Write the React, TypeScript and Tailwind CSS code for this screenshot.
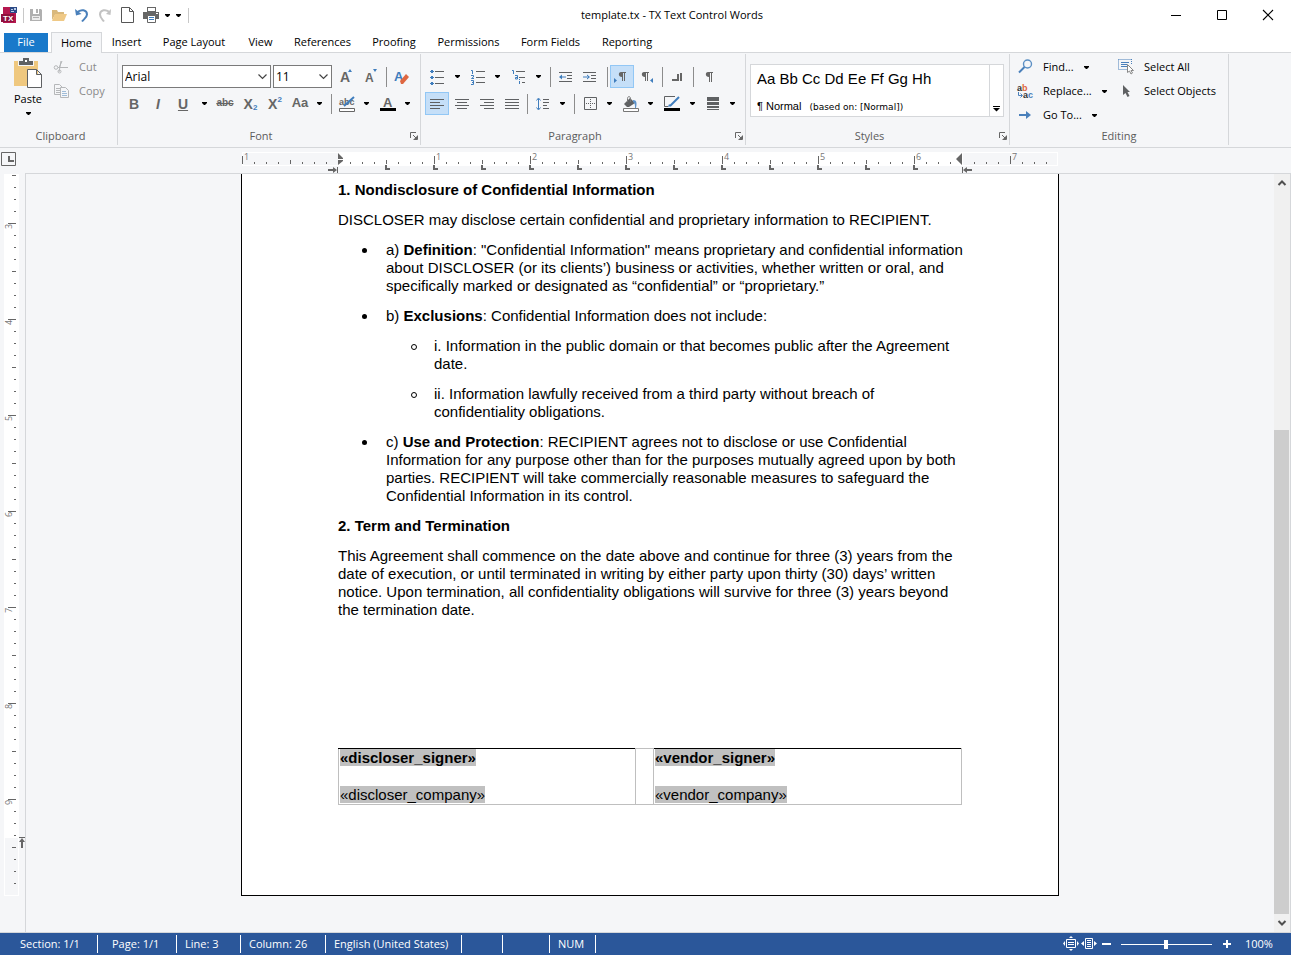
import React from "react";

const tabs = [
  { name: "Insert", width: "w-[49px]" },
  { name: "Page Layout", width: "w-[86px]" },
  { name: "View", width: "w-[47px]" },
  { name: "References", width: "w-[77px]" },
  { name: "Proofing", width: "w-[66px]" },
  { name: "Permissions", width: "w-[83px]" },
  { name: "Form Fields", width: "w-[81px]" },
  { name: "Reporting", width: "w-[72px]" },
];

type Kids = { children?: React.ReactNode };

function Icon({ w = 16, h = 16, children }: Kids & { w?: number; h?: number }) {
  return (
    <svg width={w} height={h} viewBox={`0 0 ${w} ${h}`} fill="none" aria-hidden="true" className="shrink-0 overflow-visible">
      {children}
    </svg>
  );
}

function Caret() {
  return (
    <svg width="5" height="3" viewBox="0 0 5 3" aria-hidden="true" className="shrink-0">
      <path d="M0 0h5v1L3 3H2L0 1z" fill="#000" />
    </svg>
  );
}

function Tool({ label, className, active, children }: Kids & { label: string; className: string; active?: boolean }) {
  return (
    <button
      type="button"
      aria-label={label}
      aria-pressed={active}
      className={`${className} flex h-[23px] shrink-0 items-center justify-center ${
        active ? "border border-[#92c7f5] bg-[#c5dff8]" : ""
      }`}
    >
      {children}
    </button>
  );
}

function Drop({ label, className }: { label: string; className: string }) {
  return (
    <Tool label={label} className={className}>
      <Caret />
    </Tool>
  );
}

function Sep({ className }: { className: string }) {
  return (
    <span className={`${className} flex h-[23px] shrink-0 items-center justify-center`}>
      <span className="h-5 w-px bg-[#8c8c8c]" />
    </span>
  );
}

function Group({ title, className, launcher, children }: Kids & { title: string; className: string; launcher?: boolean }) {
  return (
    <section aria-label={title} className={`${className} flex h-[91px] shrink-0 flex-col border-r border-[#d5d7da]`}>
      <div className="flex-1">{children}</div>
      <div className="flex h-[18px] items-center text-[#5c5c5c]">
        <h2 className="flex-1 text-center">{title}</h2>
        {launcher && (
          <button type="button" aria-label={`${title} settings`} className="w-5 pl-[10px]">
            <Icon w={8} h={8}>
              <path d="M.5 6V.5H6M3 3l3 3M7.500 3.500v4h-4" stroke="#666" />
              <path d="M7 4v3H4z" fill="#666" />
            </Icon>
          </button>
        )}
      </div>
    </section>
  );
}

function Lines({ rows }: { rows: number[][] }) {
  return (
    <Icon>
      {rows.map(([y, x1, x2]) => (
        <path key={y} d={`M${x1} ${y}.5H${x2}`} stroke="#5f6163" />
      ))}
    </Icon>
  );
}

const blue = "#3f7dbd";
const grey = "#666";

function Combo({ label, value, options, className }: { label: string; value: string; options: string[]; className: string }) {
  return (
    <span className={`${className} relative block h-[23px]`}>
      <select
        aria-label={label}
        defaultValue={value}
        className="h-full w-full appearance-none rounded-none border border-[#7a7a7a] bg-white pl-[2px] text-black"
      >
        {options.map((o) => (
          <option key={o}>{o}</option>
        ))}
      </select>
      <span className="pointer-events-none absolute top-[9px] right-1">
        <Icon w={9} h={6}>
          <path d="M.5.5l4 4 4-4" stroke="#444" strokeWidth="1.200" />
        </Icon>
      </span>
    </span>
  );
}

function TitleBar() {
  return (
    <header className="flex h-[30px] items-center bg-white">
      <div className="flex w-[191px] shrink-0 items-center">
        <svg width="17" height="18" viewBox="0 0 17 18" className="ml-px shrink-0" aria-hidden="true">
          <path d="M2 1h7v6h6v10H2z" fill="#b5174f" />
          <path d="M9 1h7v6H9z" fill="#2c4a86" />
          <path d="M10 3h2v1h-2zM13 2h2v2h-2zM10 5h3v1h-3z" fill="#b9cbe8" />
          <path d="M0 8h13v8H0z" fill="#8f0f3d" />
          <text x="2" y="15" fontSize="8" fontWeight="700" fill="#fff" fontFamily="Liberation Sans, sans-serif">TX</text>
        </svg>
        <span className="ml-[5px] h-[15px] w-px bg-[#c8c8c8]" />
        <button type="button" aria-label="Save" className="flex w-[23px] justify-center">
          <Icon w={14} h={14}>
            <path d="M1 1h11l1 1v11H1z" fill="#b0b0b0" />
            <path d="M4 1h6v5H4z" fill="#fff" />
            <path d="M7 1h2v4H7z" fill="#b0b0b0" />
            <path d="M3 8h8v4H3z" fill="#ececec" />
            <path d="M4 9.500h6" stroke="#b0b0b0" />
          </Icon>
        </button>
        <button type="button" aria-label="Open" className="flex w-[23px] justify-center">
          <Icon w={16} h={14}>
            <path d="M1 2h5l1 2h6v3H4l-3 5z" fill="#d9b87c" />
            <path d="M4 6h12l-3 7H1z" fill="#efc986" />
          </Icon>
        </button>
        <button type="button" aria-label="Undo" className="flex w-[23px] justify-center">
          <Icon w={14} h={14}>
            <path d="M2 4.500C6 .5 12 2 12 6.500c0 3-3 4.500-5 7" stroke="#4a80bb" strokeWidth="2" />
            <path d="M0 1l1 6.500L6.500 6z" fill="#4a80bb" />
          </Icon>
        </button>
        <button type="button" aria-label="Redo" className="flex w-[23px] justify-center">
          <Icon w={14} h={14}>
            <path d="M12 4.500C8 .5 2 2 2 6.500c0 3 2 4.500 4 7" stroke="#c2c2c2" strokeWidth="2" />
            <path d="M13 1l-.5 6L8 6z" fill="#c2c2c2" />
          </Icon>
        </button>
        <button type="button" aria-label="New" className="flex w-[23px] justify-center">
          <Icon w={13} h={16}>
            <path d="M.5.5h8l4 4v11H.5zM8.500.5v4h4" stroke="#555" />
          </Icon>
        </button>
        <button type="button" aria-label="Print" className="flex w-[23px] justify-center">
          <Icon w={16} h={16}>
            <path d="M4 0h9v5H4z" fill={grey} />
            <path d="M5 1h7v3H5z" fill="#fff" />
            <path d="M0 5h16v7H0z" fill={grey} />
            <path d="M13 6h2v1h-2z" fill="#fff" />
            <path d="M4.500 8.500h8v7h-8z" fill="#fff" stroke={grey} />
            <path d="M6 10.500h5M6 12.500h5" stroke={blue} />
          </Icon>
        </button>
        <button type="button" aria-label="Print options" className="flex w-[11px] justify-center">
          <Caret />
        </button>
        <button type="button" aria-label="Customize toolbar" className="flex w-[11px] justify-center">
          <Caret />
        </button>
        <span className="ml-1 h-[15px] w-px bg-[#c8c8c8]" />
      </div>
      <h1 className="flex-1 text-center text-black">template.tx - TX Text Control Words</h1>
      <div className="flex shrink-0">
        <button type="button" aria-label="Minimize" className="flex w-[46px] justify-center">
          <Icon w={10} h={10}><path d="M0 5.500h10" stroke="#000" /></Icon>
        </button>
        <button type="button" aria-label="Maximize" className="flex w-[46px] justify-center">
          <Icon w={10} h={10}><path d="M.5.5h9v9h-9z" stroke="#000" /></Icon>
        </button>
        <button type="button" aria-label="Close" className="flex w-[46px] justify-center">
          <Icon w={10} h={10}><path d="M0 0l10 10M10 0L0 10" stroke="#000" strokeWidth="1.100" /></Icon>
        </button>
      </div>
    </header>
  );
}

function TabRow() {
  return (
    <nav aria-label="Ribbon" className="flex h-[22px] items-end bg-white pl-1 text-black">
      <button type="button" className="h-[19px] w-11 bg-[#1979ca] text-white">File</button>
      <button
        type="button"
        aria-current="page"
        className="relative top-px ml-[3px] h-[21px] w-[51px] border border-b-0 border-[#d5d7da] bg-[#f5f6f8]"
      >
        Home
      </button>
      {tabs.map((t) => (
        <button key={t.name} type="button" className={`${t.width} h-5 shrink-0 whitespace-nowrap`}>
          {t.name}
        </button>
      ))}
    </nav>
  );
}

function Clipboard() {
  return (
    <Group title="Clipboard" className="w-[118px] pl-1">
      <div className="flex">
        <button type="button" className="flex w-12 flex-col items-center pt-1 text-black">
          <Icon w={28} h={31}>
            <path d="M0 3h24v25H0z" fill="#efc87f" />
            <path d="M9 0h6v3h4v4H5V3h4z" fill="#5f6163" />
            <path d="M11 2h2v2h-2z" fill="#fff" />
            <path d="M4 3h1v4h14V3h1v5H4z" fill="#f5f6f8" />
            <path d="M13.500 11.500h9l5 5v13h-14zM22.500 11.500v5h5" fill="#fff" stroke="#5f6163" />
          </Icon>
          <span className="h-5 leading-5">Paste</span>
          <span className="pt-[3px]"><Caret /></span>
        </button>
        <div className="flex flex-col pt-px text-[#8a8a8a]">
          <button type="button" className="flex h-6 items-center gap-2">
            <Icon w={19} h={14}>
              <path d="M6 7.500h10M7 8l3-7M9 1L7 12" stroke="#b5b7b9" />
              <circle cx="4" cy="7.500" r="1.800" stroke="#b5b7b9" />
              <circle cx="7.500" cy="11.500" r="1.500" stroke="#b5b7b9" />
            </Icon>
            Cut
          </button>
          <button type="button" className="flex h-6 items-center gap-2">
            <Icon w={19} h={14}>
              <path d="M2.500.5h5l3 3v7h-8zM4 4.500h4M4 6.500h4M4 8.500h4" stroke="#b5b7b9" />
              <path d="M8.500 3.500h5l3 3v7h-8z" fill="#f5f6f8" stroke="#b5b7b9" />
              <path d="M10 7.500h4M10 9.500h5M10 11.500h5" stroke="#9fbcd8" />
            </Icon>
            Copy
          </button>
        </div>
      </div>
    </Group>
  );
}

function FontGroup() {
  return (
    <Group title="Font" launcher className="pl-1">
      <div className="flex flex-col gap-1 pt-[11px] pr-[5px] font-['Liberation_Sans',sans-serif] text-sm font-bold text-[#666]">
        <div className="flex font-['Open_Sans','Noto_Sans',sans-serif] text-xs font-normal">
          <Combo label="Font family" value="Arial" options={["Arial", "Times New Roman"]} className="w-[149px]" />
          <Combo label="Font size" value="11" options={["10", "11", "12"]} className="ml-[2px] w-[59px]" />
          <Tool label="Grow font" className="ml-[2px] w-6">
            <Icon>
              <text x="2" y="13" fontSize="14" fontWeight="700" fill={grey} fontFamily="Liberation Sans, sans-serif">A</text>
              <path d="M10 3l2-3 2 3z" fill={blue} />
            </Icon>
          </Tool>
          <Tool label="Shrink font" className="w-[26px]">
            <Icon>
              <text x="2" y="13" fontSize="12" fontWeight="700" fill={grey} fontFamily="Liberation Sans, sans-serif">A</text>
              <path d="M10 0l2 3 2-3z" fill={blue} />
            </Icon>
          </Tool>
          <Sep className="w-[5px]" />
          <Tool label="Clear formatting" className="w-[26px]">
            <Icon>
              <text x="0" y="12" fontSize="13" fontWeight="700" fill={blue} fontFamily="Liberation Sans, sans-serif">A</text>
              <path d="M6 12l6-7 3 3-6 7H7z" fill="#de6741" />
            </Icon>
          </Tool>
        </div>
        <div className="flex">
          <Tool label="Bold" className="w-6">B</Tool>
          <Tool label="Italic" className="w-6"><i>I</i></Tool>
          <Tool label="Underline" className="w-[26px]"><u>U</u></Tool>
          <Drop label="Underline style" className="w-4" />
          <Tool label="Strikethrough" className="w-[26px]"><s className="text-[10px]">abc</s></Tool>
          <Tool label="Subscript" className="w-[25px]">X<span className="pt-2 text-[8px] text-[#3f7dbd]">2</span></Tool>
          <Tool label="Superscript" className="w-6">X<span className="pb-2 text-[8px] text-[#3f7dbd]">2</span></Tool>
          <Tool label="Change case" className="w-[26px] text-[13px]">Aa</Tool>
          <Drop label="Case options" className="w-3" />
          <Sep className="w-3" />
          <Tool label="Highlight color" className="w-5">
            <Icon>
              <text x="0" y="9" fontSize="9" fontWeight="700" fill={grey} fontFamily="Liberation Sans, sans-serif">abc</text>
              <path d="M15 1L5 10" stroke={blue} strokeWidth="2" />
              <path d="M.5 12.500h15v3H.5z" fill="#fff" stroke={grey} />
            </Icon>
          </Tool>
          <Drop label="Highlight options" className="w-[19px]" />
          <Tool label="Font color" className="w-6">
            <Icon>
              <text x="3" y="11" fontSize="13" fontWeight="700" fill={grey} fontFamily="Liberation Sans, sans-serif">A</text>
              <path d="M0 12h16v3H0z" fill="#000" />
            </Icon>
          </Tool>
          <Drop label="Font color options" className="w-[14px]" />
        </div>
      </div>
    </Group>
  );
}

function Paragraph() {
  return (
    <Group title="Paragraph" launcher className="pl-1">
      <div className="flex flex-col gap-1 pt-[11px] pr-2 font-['Liberation_Sans',sans-serif] text-sm font-bold text-[#666]">
        <div className="flex">
          <Tool label="Bullets" className="w-6">
            <Icon w={14} h={16}>
              <path d="M5 2.500h9M5 8.500h9M5 14.500h9" stroke="#5f6163" />
              <path d="M1 1h2v3H1zM1 7h2v3H1zM1 13h2v3H1zM0 2h4v1H0zM0 8h4v1H0zM0 14h4v1H0z" fill={blue} />
            </Icon>
          </Tool>
          <Drop label="Bullet options" className="w-[17px]" />
          <Tool label="Numbering" className="w-6">
            <Icon w={14} h={16}>
              <path d="M5 2.500h9M5 8.500h9M5 13.500h9" stroke="#5f6163" />
              <path d="M0 1.500h1.500V5M0 6.500h2.500v1.500L0.500 9.500H3M0 11.500h2.500v4H0M1 13.500h2" stroke={blue} />
            </Icon>
          </Tool>
          <Drop label="Numbering options" className="w-[15px]" />
          <Tool label="Multilevel list" className="w-7">
            <Icon w={14} h={16}>
              <path d="M4 2.500h9M7 8.500h6M10 13.500h3" stroke="#5f6163" />
              <path d="M0 1.500h1.500V5M3 6.500h2.500V10H3.500V8.500H5M7.500 10v1M7.500 12v3" stroke={blue} />
            </Icon>
          </Tool>
          <Drop label="Multilevel options" className="w-[10px]" />
          <Sep className="w-[14px]" />
          <Tool label="Decrease indent" className="w-[18px]">
            <Icon w={14} h={12}>
              <path d="M0 1.500h13M8 4.500h5M8 7.500h5M0 10.500h13" stroke="#5f6163" />
              <path d="M0 6l3-2.500v5zM2 5.500h5v1H2z" fill={blue} />
            </Icon>
          </Tool>
          <Tool label="Increase indent" className="w-[30px]">
            <Icon w={14} h={12}>
              <path d="M0 1.500h13M8 4.500h5M8 7.500h5M0 10.500h13" stroke="#5f6163" />
              <path d="M7 6L4 3.500v5zM0 5.500h5v1H0z" fill={blue} />
            </Icon>
          </Tool>
          <Sep className="w-[5px]" />
          <Tool label="Left to right" className="w-6" active>
            <Icon>
              <path d="M7 3h5v1h-1v8h-1V4H9v8H8V8C4 8 4 3 7 3z" fill={grey} />
              <path d="M0 9l3 2.500L0 14z" fill={blue} />
            </Icon>
          </Tool>
          <Tool label="Right to left" className="w-[26px]">
            <Icon>
              <path d="M5 3h5v1H9v8H8V4H7v8H6V8C2 8 2 3 5 3z" fill={grey} />
              <path d="M14 9l-3 2.500 3 2.500z" fill={blue} />
            </Icon>
          </Tool>
          <Sep className="w-[5px]" />
          <Tool label="Tabs" className="w-[26px]">
            <Icon w={12} h={10}>
              <path d="M5 2h2v7H0V7h5zM8 1h2v8H8z" fill={grey} />
            </Icon>
          </Tool>
          <Sep className="w-[5px]" />
          <Tool label="Show control characters" className="w-[26px]">
            <Icon>
              <path d="M7 3h5v1h-1v9h-1V4H9v9H8V8C4 8 4 3 7 3z" fill={grey} />
            </Icon>
          </Tool>
        </div>
        <div className="flex">
          <Tool label="Align left" className="w-6" active>
            <Lines rows={[[3, 1, 15], [6, 1, 11], [9, 1, 15], [12, 1, 11]]} />
          </Tool>
          <Tool label="Align center" className="w-[26px]">
            <Lines rows={[[3, 1, 15], [6, 3, 13], [9, 1, 15], [12, 3, 13]]} />
          </Tool>
          <Tool label="Align right" className="w-6">
            <Lines rows={[[3, 1, 15], [6, 5, 15], [9, 1, 15], [12, 5, 15]]} />
          </Tool>
          <Tool label="Justify" className="w-[26px]">
            <Lines rows={[[3, 1, 15], [6, 1, 15], [9, 1, 15], [12, 1, 15]]} />
          </Tool>
          <Sep className="w-[5px]" />
          <Tool label="Line spacing" className="w-[26px]">
            <Icon w={14} h={14}>
              <path d="M7 2.500h6M7 5.500h6M7 8.500h4M7 11.500h6" stroke="#5f6163" />
              <path d="M2.500 2v10M.5 3.500l2-2.500 2 2.500M.5 10.500l2 2.500 2-2.500" stroke={blue} />
            </Icon>
          </Tool>
          <Drop label="Line spacing options" className="w-[13px]" />
          <Sep className="w-[11px]" />
          <Tool label="Borders" className="w-5">
            <Icon w={13} h={13}>
              <path d="M.5.5h12v12H.5z" stroke="#5f6163" />
              <path d="M6.500 2v9M2 6.500h9" stroke="#5f6163" strokeDasharray="1 1" />
            </Icon>
          </Tool>
          <Drop label="Border options" className="w-[19px]" />
          <Tool label="Shading" className="w-6">
            <Icon>
              <path d="M7 2l5 5-6 4H4L1 8z" fill="#5f6163" />
              <path d="M4.500 6V2.500c0-2.500 3-2.500 3 0V6" stroke="#777" />
              <path d="M10 4c4 0 4 3 3 8h-1c0-3 0-5-2-6z" fill="#5d92c9" />
              <path d="M.5 12.500h15v3H.5z" fill="#fff" stroke="#777" />
            </Icon>
          </Tool>
          <Drop label="Shading options" className="w-[15px]" />
          <Tool label="Frame line color" className="w-7">
            <Icon>
              <path d="M11 .5H.5v10H4" stroke="#5f6163" />
              <path d="M15 1l-9 9" stroke={blue} strokeWidth="2" />
              <path d="M4 11l1-3 2 2z" fill={blue} />
              <path d="M0 12h16v3H0z" fill="#000" />
            </Icon>
          </Tool>
          <Drop label="Line color options" className="w-3" />
          <Tool label="Frame line width" className="w-[30px]">
            <Icon w={12} h={13}>
              <path d="M0 0h12v4H0zM0 5h12v3H0zM0 9h12v2H0zM0 12h12v1H0z" fill="#5f6163" />
            </Icon>
          </Tool>
          <Drop label="Line width options" className="w-[9px]" />
        </div>
      </div>
    </Group>
  );
}

function Styles() {
  return (
    <Group title="Styles" launcher className="pl-1">
      <div className="mt-[10px] mr-[5px] flex h-[53px] w-[254px] border border-[#d5d7da] bg-white text-black">
        <button type="button" className="flex flex-1 flex-col pl-[6px] text-left font-['Liberation_Sans',sans-serif] whitespace-nowrap">
          <span className="pt-1 text-[15px] leading-5">Aa Bb Cc Dd Ee Ff Gg Hh</span>
          <span className="flex items-baseline gap-2 pt-[9px] text-[11px] leading-4">
            <span>¶ Normal</span>
            <span className="font-['DejaVu_Sans',sans-serif] text-[9px]">(based on: [Normal])</span>
          </span>
        </button>
        <button type="button" aria-label="More styles" className="flex w-[14px] items-end justify-center border-l border-[#d5d7da] pb-1">
          <Icon w={7} h={6}>
            <path d="M0 .5h7" stroke="#000" />
            <path d="M0 2h7L3.500 5.500z" fill="#000" />
          </Icon>
        </button>
      </div>
    </Group>
  );
}

function Editing() {
  return (
    <Group title="Editing" className="w-[219px]">
      <div className="flex pt-px pl-[7px] text-black">
        <div className="flex w-[101px] flex-col">
          <div className="flex h-6 items-center">
            <button type="button" className="flex items-center gap-[10px]">
              <Icon>
                <circle cx="10.500" cy="5" r="4" stroke="#5b8fc4" strokeWidth="1.400" />
                <path d="M7.500 8L2 13.500" stroke="#4a80bb" strokeWidth="2" />
              </Icon>
              Find...
            </button>
            <button type="button" aria-label="Find options" className="ml-[10px]"><Caret /></button>
          </div>
          <div className="flex h-6 items-center">
            <button type="button" className="flex items-center gap-[10px]">
              <Icon>
                <g fontSize="9" fontWeight="700" fontFamily="Liberation Sans, sans-serif">
                  <text x="0" y="8" fill="#333">a</text>
                  <text x="5" y="8" fill="#de6741">b</text>
                  <text x="6" y="15" fill="#333">a</text>
                  <text x="11" y="15" fill="#4a80bb">c</text>
                </g>
                <path d="M1.500 9v3.500H5M3.500 10.500l2 2-2 2" stroke="#4a80bb" />
              </Icon>
              Replace...
            </button>
            <button type="button" aria-label="Replace options" className="ml-[10px]"><Caret /></button>
          </div>
          <div className="flex h-6 items-center">
            <button type="button" className="flex items-center gap-[10px]">
              <Icon>
                <path d="M2 7h7V4l5 4-5 4V9H2z" fill="#4a80bb" />
              </Icon>
              Go To...
            </button>
            <button type="button" aria-label="Go to options" className="ml-[10px]"><Caret /></button>
          </div>
        </div>
        <div className="flex flex-col whitespace-nowrap">
          <button type="button" className="flex h-6 items-center gap-[10px]">
            <Icon>
              <path d="M.5 .5h13M.5 10.500h9M.5 .5v10M13.500 0v6" stroke="#4a80bb" strokeDasharray="1 1" />
              <path d="M3 3.500h8M3 5.500h6M3 7.500h6" stroke="#4a80bb" />
              <path d="M9.500 5.500v8l2-1.500 1.500 3 1.500-1-1.500-2.500h2.500z" fill="#fff" stroke="#888" />
            </Icon>
            Select All
          </button>
          <button type="button" className="flex h-6 items-center gap-[10px]">
            <Icon>
              <path d="M5 2v10l2.500-2 2 4 2-1-2-4H12z" fill="#5f6163" />
            </Icon>
            Select Objects
          </button>
        </div>
      </div>
    </Group>
  );
}

const ticks = Array.from({ length: 68 }, (_, i) => i);

function HorizontalRuler() {
  return (
    <div className="flex h-[26px] bg-[#f5f6f8]">
      <div className="w-[25px] shrink-0 pt-1 pl-px">
        <button type="button" aria-label="Left tab" className="block">
          <Icon w={15} h={14}>
            <path d="M.5.5h14v13H.5z" stroke="#666" />
            <path d="M7 4h2v4h4v2H7z" fill="#666" />
          </Icon>
        </button>
      </div>
      <div className="flex flex-1 justify-center border-b border-[#d5d7da]">
        <svg width="818" height="25" viewBox="0 0 818 25" className="shrink-0" role="img" aria-label="Horizontal ruler">
          <path d="M1 4h816v14H1z" fill="#fff" />
          <path d="M2 5h95v12H2zM722 5h94v12h-94z" fill="#f5f6f8" />
          {ticks.map((i) => {
            const x = 1 + i * 12;
            if (i === 8 || i === 60) return null;
            const top = i % 8 === 0 ? 8 : i % 4 === 0 ? 12 : 14;
            return <path key={i} d={`M${x} ${top}h1v${16 - top}h-1z`} fill="#666" />;
          })}
          {[1, 2, 3, 4, 5, 6, 7].map((n) => (
            <text key={n} x={100 + n * 96 - 1} y="12" fontSize="9" fill="#777" fontFamily="Open Sans, Noto Sans, sans-serif">
              {n}
            </text>
          ))}
          <text x="3" y="12" fontSize="9" fill="#777" fontFamily="Open Sans, Noto Sans, sans-serif">1</text>
          {Array.from({ length: 12 }, (_, i) => (
            <path key={i} d={`M${144 + i * 48} 17h2v3h3v2h-5z`} fill="#666" />
          ))}
          <path d="M97 5l5 5v1h-5zM97 12h5v1l-5 4zM721 5v12l-6-6z" fill="#666" />
          <path d="M87 21h5v-2l4 3-4 3v-2h-5zM96 19h1v6h-1zM721 19h1v6h-1zM731 21h-5v-2l-4 3 4 3v-2h5z" fill="#666" />
        </svg>
      </div>
      <div className="w-[17px] shrink-0 border-b border-[#d5d7da]" />
    </div>
  );
}

function VerticalRuler() {
  const rows = Array.from({ length: 60 }, (_, i) => i);
  return (
    <div className="w-[26px] shrink-0 border-r border-[#d5d7da]">
      <svg width="25" height="722" viewBox="0 0 25 722" role="img" aria-label="Vertical ruler">
        <path d="M4 0h15v722H4z" fill="#fff" />
        <path d="M5 664h13v57H5z" fill="#f5f6f8" />
        {rows.map((i) => {
          const y = 1 + i * 12;
          const left = i % 8 === 4 ? 8 : i % 4 === 0 ? 12 : 14;
          return <path key={i} d={`M${left} ${y}h${16 - left}v1h-${16 - left}z`} fill="#666" />;
        })}
        {[3, 4, 5, 6, 7, 8, 9].map((n, i) => (
          <text
            key={n}
            transform={`translate(12 ${55 + i * 96}) rotate(-90)`}
            fontSize="9"
            fill="#777"
            fontFamily="Open Sans, Noto Sans, sans-serif"
          >
            {n}
          </text>
        ))}
        <path d="M19 663h6v1h-6zM22 664l3 4h-2v6h-2v-6h-2z" fill="#666" />
      </svg>
    </div>
  );
}

function Field({ children }: Kids) {
  return <span className="bg-[#c0c0c0]">{children}</span>;
}

function Page() {
  return (
    <article className="mx-auto w-[818px] border-x border-b border-black bg-white px-24 pt-[7px] pb-[90px] font-['Liberation_Sans',Arial,sans-serif] text-[15px] leading-[18px] whitespace-nowrap text-black">
      <div className="flex flex-col gap-3">
        <h3 className="font-bold">1. Nondisclosure of Confidential Information</h3>
        <p>DISCLOSER may disclose certain confidential and proprietary information to RECIPIENT.</p>
        <ul className="flex flex-col gap-3 pl-12">
          <li className="relative">
            <Dot />
            a) <b>Definition</b>: "Confidential Information" means proprietary and confidential information
            <br />
            about DISCLOSER (or its clients’) business or activities, whether written or oral, and
            <br />
            specifically marked or designated as “confidential” or “proprietary.”
          </li>
          <li className="relative">
            <Dot />
            b) <b>Exclusions</b>: Confidential Information does not include:
            <ul className="flex flex-col gap-3 pt-3 pl-12">
              <li className="relative">
                <Ring />
                i. Information in the public domain or that becomes public after the Agreement
                <br />
                date.
              </li>
              <li className="relative">
                <Ring />
                ii. Information lawfully received from a third party without breach of
                <br />
                confidentiality obligations.
              </li>
            </ul>
          </li>
          <li className="relative">
            <Dot />
            c) <b>Use and Protection</b>: RECIPIENT agrees not to disclose or use Confidential
            <br />
            Information for any purpose other than for the purposes mutually agreed upon by both
            <br />
            parties. RECIPIENT will take commercially reasonable measures to safeguard the
            <br />
            Confidential Information in its control.
          </li>
        </ul>
        <h3 className="font-bold">2. Term and Termination</h3>
        <p>
          This Agreement shall commence on the date above and continue for three (3) years from the
          <br />
          date of execution, or until terminated in writing by either party upon thirty (30) days’ written
          <br />
          notice. Upon termination, all confidentiality obligations will survive for three (3) years beyond
          <br />
          the termination date.
        </p>
      </div>
      <table className="mt-[129px] w-full table-fixed border-collapse">
        <tbody>
          <tr>
            <td className="w-[297px] border border-[#bfbfbf] border-t-black p-0 pl-px">
              <p className="mb-[19px] font-bold"><Field>«discloser_signer»</Field></p>
              <p><Field>«discloser_company»</Field></p>
            </td>
            <td className="w-[18px] border border-[#bfbfbf] p-0" />
            <td className="border border-[#bfbfbf] border-t-black p-0 pl-px">
              <p className="mb-[19px] font-bold"><Field>«vendor_signer»</Field></p>
              <p><Field>«vendor_company»</Field></p>
            </td>
          </tr>
        </tbody>
      </table>
    </article>
  );
}

function Dot() {
  return <span aria-hidden="true" className="absolute top-[7px] -left-[24px] size-[5px] rounded-full bg-black" />;
}

function Ring() {
  return <span aria-hidden="true" className="absolute top-[7px] -left-[23px] size-[6px] rounded-full border border-black" />;
}

function ScrollBar() {
  return (
    <div className="flex w-[17px] shrink-0 flex-col border-r border-[#d5d7da] bg-[#f0f0f0]">
      <button type="button" aria-label="Scroll up" className="flex h-[17px] w-[15px] items-center justify-center">
        <Icon w={8} h={6}><path d="M.5 5L4 1.500 7.500 5" stroke="#505050" strokeWidth="2" /></Icon>
      </button>
      <div className="flex-[239_1_0%]" />
      <div className="w-[15px] flex-[484_1_0%] bg-[#cdcdcd]" />
      <button type="button" aria-label="Scroll down" className="flex h-[18px] w-[15px] items-center justify-center">
        <Icon w={8} h={6}><path d="M.5 1L4 4.500 7.500 1" stroke="#505050" strokeWidth="2" /></Icon>
      </button>
    </div>
  );
}

function StatusBar() {
  return (
    <footer className="flex h-[22px] shrink-0 items-center bg-[#2b579a] text-white">
      <span className="h-[18px] w-[98px] border-r border-white pl-5 leading-[18px]">Section: 1/1</span>
      <span className="h-[18px] w-[79px] border-r border-white pl-[14px] leading-[18px]">Page: 1/1</span>
      <span className="h-[18px] w-16 border-r border-white pl-2 leading-[18px]">Line: 3</span>
      <span className="h-[18px] w-[85px] border-r border-white pl-2 leading-[18px]">Column: 26</span>
      <span className="h-[18px] w-[136px] border-r border-white pl-2 leading-[18px] whitespace-nowrap">English (United States)</span>
      <span className="h-[18px] w-[41px] border-r border-white" />
      <span className="h-[18px] w-[47px] border-r border-white" />
      <span className="h-[18px] w-[46px] border-r border-white pl-2 leading-[18px]">NUM</span>
      <div className="ml-auto flex items-center">
        <button type="button" aria-label="Fit page">
          <Icon>
            <path d="M3.500 3.500h9v8h-9z" stroke="#fff" />
            <path d="M5 6.500h6M5 8.500h6" stroke="#fff" />
            <path d="M8 0l2 2H6zM8 15l2-2H6zM0 7.500L2 5v5zM16 7.500L14 5v5z" fill="#fff" />
          </Icon>
        </button>
        <button type="button" aria-label="Fit width" className="ml-[2px]">
          <Icon>
            <path d="M4.500 2.500h7v10h-7z" stroke="#fff" />
            <path d="M6 4.500h4M6 6.500h4M6 8.500h4M6 10.500h4" stroke="#fff" />
            <path d="M0 7.500L3 5v5zM16 7.500L13 5v5z" fill="#fff" />
          </Icon>
        </button>
        <button type="button" aria-label="Zoom out" className="ml-[5px]">
          <Icon w={9} h={8}><path d="M0 4h9" stroke="#fff" strokeWidth="2" /></Icon>
        </button>
        <input
          type="range"
          aria-label="Zoom"
          min={0}
          max={100}
          defaultValue={49}
          className="ml-[10px] h-4 w-[91px] appearance-none bg-transparent [&::-webkit-slider-runnable-track]:h-px [&::-webkit-slider-runnable-track]:bg-white [&::-webkit-slider-thumb]:-mt-1 [&::-webkit-slider-thumb]:h-[9px] [&::-webkit-slider-thumb]:w-1 [&::-webkit-slider-thumb]:appearance-none [&::-webkit-slider-thumb]:bg-white"
        />
        <button type="button" aria-label="Zoom in" className="ml-[11px]">
          <Icon w={8} h={8}><path d="M0 4h8M4 0v8" stroke="#fff" strokeWidth="2" /></Icon>
        </button>
        <span className="w-[60px] pl-[14px]">100%</span>
      </div>
    </footer>
  );
}

export default function App() {
  return (
    <div className="flex h-screen flex-col overflow-hidden bg-[#f5f6f8] font-['Open_Sans','Noto_Sans',sans-serif] text-[11px]">
      <TitleBar />
      <TabRow />
      <div className="flex h-24 shrink-0 border-y border-[#d5d7da] bg-[#f5f6f8] pt-px">
        <Clipboard />
        <FontGroup />
        <Paragraph />
        <Styles />
        <Editing />
      </div>
      <HorizontalRuler />
      <main className="flex min-h-0 flex-1 border-b border-[#d5d7da]">
        <VerticalRuler />
        <div className="flex-1">
          <Page />
        </div>
        <ScrollBar />
      </main>
      <StatusBar />
    </div>
  );
}
